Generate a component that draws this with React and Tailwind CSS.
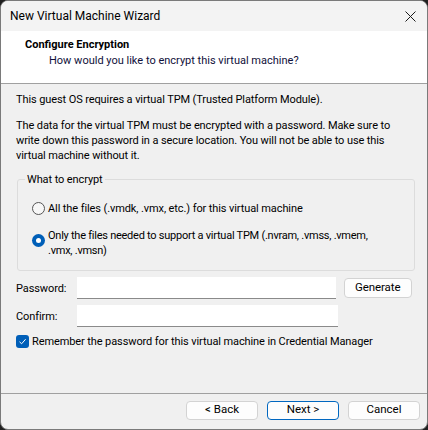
import React from "react";

const font = {fontFamily: 'Roboto, "Liberation Sans", sans-serif'};

const Radio = ({checked}) => (
    checked ? (
        <span className="flex h-[13px] w-[13px] shrink-0 items-center justify-center rounded-full bg-[#005fb8]">
            <span className="h-[5px] w-[5px] rounded-full bg-white"/>
        </span>
    ) : (
        <span className="h-[13px] w-[13px] shrink-0 rounded-full border border-[#555] bg-[#f7f7f7]"/>
    )
);

const Button = ({children, primary, className = ""}) => (
    <button
        className={`h-[19px] rounded-[4px] border bg-[#fdfdfd] text-[11.5px] leading-none text-black ${primary ? "border-[#0067c0]" : "border-[#d3d3d3]"} ${className}`}>
        {children}
    </button>
);

export default function App() {
    return (
        <div className="h-[430px] w-[428px] bg-[#202020]" style={font}>
            <div className="flex h-full flex-col overflow-hidden rounded-[8px] border border-[#7a7a7a] bg-[#f0f0f0] text-[11px] text-black">
                {/* title bar */}
                <div className="flex h-[30px] shrink-0 items-center justify-between bg-[#f3f3f3] pl-[9px] pr-[8px]">
                    <span className="whitespace-nowrap text-[12px] leading-none">New Virtual Machine Wizard</span>
                    <svg width="11" height="11" viewBox="0 0 11 11" className="mr-[3px]">
                        <path d="M0.5 0.5 L10.5 10.5 M10.5 0.5 L0.5 10.5" stroke="#1a1a1a" strokeWidth="1"/>
                    </svg>
                </div>

                {/* header */}
                <div className="flex h-[53px] shrink-0 flex-col border-b border-[#a0a0a0] bg-white pl-[24px] pt-[6px] leading-[16px]">
                    <span className="whitespace-nowrap font-bold">Configure Encryption</span>
                    <span className="whitespace-nowrap pl-[24px] text-[#10103a]">How would you like to encrypt this virtual machine?</span>
                </div>

                {/* body */}
                <div className="flex flex-1 flex-col px-[15px] pt-[8px] leading-[15px] tracking-[-0.1px]">
                    <p className="whitespace-nowrap">This guest OS requires a virtual TPM (Trusted Platform Module).</p>
                    <p className="mt-[11px] whitespace-nowrap">
                        The data for the virtual TPM must be encrypted with a password. Make sure to<br/>
                        write down this password in a secure location. You will not be able to use this<br/>
                        virtual machine without it.
                    </p>

                    <fieldset className="mt-[9px] ml-[1px] mr-[-3px] h-[99px] rounded-[3px] border border-[#dcdcdc] px-[14px]">
                        <legend className="ml-[-7px] px-[2px]">What to encrypt</legend>
                        <div className="mt-[14px] flex items-center gap-[3px] whitespace-nowrap">
                            <Radio/>
                            <span>All the files (.vmdk, .vmx, etc.) for this virtual machine</span>
                        </div>
                        <div className="mt-[12px] flex items-start gap-[3px] whitespace-nowrap">
                            <span className="mt-[6px]"><Radio checked/></span>
                            <span className="tracking-[-0.25px]">Only the files needed to support a virtual TPM (.nvram, .vmss, .vmem,<br/>.vmx, .vmsn)</span>
                        </div>
                    </fieldset>

                    <div className="mt-[6px] flex items-center">
                        <span className="w-[61px]">Password:</span>
                        <div className="h-[22px] w-[261px] border-b border-[#8a8a8a] bg-white"/>
                        <Button className="ml-[8px] h-[20px] w-[69px]">Generate</Button>
                    </div>
                    <div className="mt-[6px] flex items-center">
                        <span className="w-[61px]">Confirm:</span>
                        <div className="h-[22px] w-[261px] border-b border-[#8a8a8a] bg-white"/>
                    </div>

                    <div className="mt-[7px] flex items-center gap-[3px] whitespace-nowrap">
                        <span className="flex h-[13px] w-[13px] shrink-0 items-center justify-center rounded-[3px] bg-[#005fb8]">
                            <svg width="9" height="9" viewBox="0 0 9 9">
                                <path d="M1.5 4.8 L3.6 6.8 L7.6 2.2" fill="none" stroke="white" strokeWidth="1"/>
                            </svg>
                        </span>
                        <span>Remember the password for this virtual machine in Credential Manager</span>
                    </div>
                </div>

                {/* footer */}
                <div className="flex h-[36px] shrink-0 items-center justify-end gap-[9px] border-t border-[#a0a0a0] pr-[7px] pb-[3px]">
                    <Button className="w-[72px]">&lt; Back</Button>
                    <Button primary className="w-[72px]">Next &gt;</Button>
                    <Button className="w-[72px]">Cancel</Button>
                </div>
            </div>
        </div>
    );
}
